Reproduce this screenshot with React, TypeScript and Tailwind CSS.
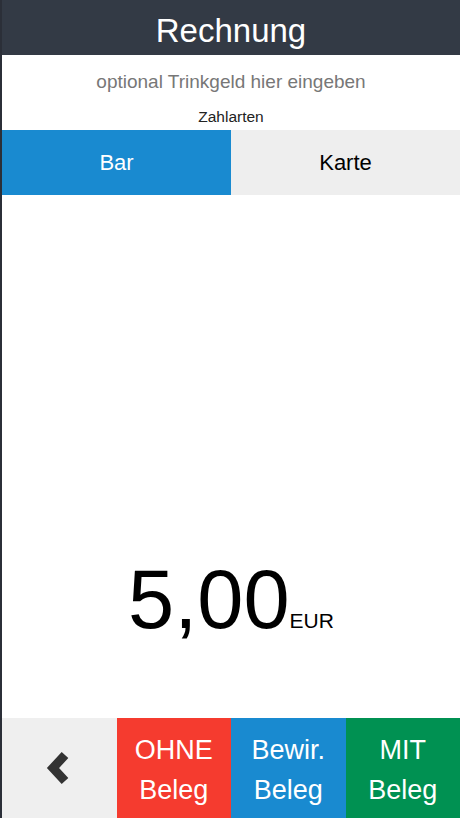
import React from 'react';

function ChevronLeft() {
  return (
    <svg width="26" height="34" viewBox="0 0 26 34" className="text-[#333333]">
      <path d="M20 4 L8 17 L20 30" fill="none" stroke="currentColor" strokeWidth="9" strokeLinejoin="miter" strokeLinecap="butt" />
    </svg>
  );
}

export default function App() {
  const font = { fontFamily: 'Helvetica, "Liberation Sans", Arial, sans-serif' };
  return (
    <div className="h-[818px] w-[460px] flex flex-col bg-white border-l-2 border-[#2b2f38] overflow-hidden" style={font}>
      {/* Header */}
      <header className="h-[55px] shrink-0 bg-[#333a45] flex items-center justify-center">
        <h1 className="text-[33px] leading-none text-white pt-[5px]">Rechnung</h1>
      </header>

      <div className="h-[52px] flex items-center justify-center text-[19px] text-[#777777] pt-[2px]">
        optional Trinkgeld hier eingeben
      </div>
      <div className="h-[23px] flex items-start justify-center text-[15.5px] text-[#222222] leading-[20px]">
        Zahlarten
      </div>

      {/* Payment type tabs */}
      <div className="h-[65px] grid grid-cols-2 shrink-0">
        <button className="bg-[#198ad0] text-white text-[22px]">Bar</button>
        <button className="bg-[#eeeeee] text-black text-[22px]">Karte</button>
      </div>

      {/* Amount */}
      <div className="flex-1 flex items-end justify-center pb-[77px]">
        <div className="flex items-baseline text-black">
          <span className="text-[83px] leading-none">5,00</span>
          <span className="text-[21px] leading-none">EUR</span>
        </div>
      </div>

      {/* Bottom actions */}
      <div className="h-[100px] shrink-0 grid grid-cols-4">
        <button className="bg-[#efefef] flex items-center justify-center pr-[2px]">
          <ChevronLeft />
        </button>
        <button className="bg-[#f53b2f] text-white text-[27px] leading-[40px] pt-[3px] flex flex-col items-center justify-center">
          <span>OHNE</span>
          <span>Beleg</span>
        </button>
        <button className="bg-[#198ad0] text-white text-[27px] leading-[40px] pt-[3px] flex flex-col items-center justify-center">
          <span>Bewir.</span>
          <span>Beleg</span>
        </button>
        <button className="bg-[#009152] text-white text-[27px] leading-[40px] pt-[3px] flex flex-col items-center justify-center">
          <span>MIT</span>
          <span>Beleg</span>
        </button>
      </div>
    </div>
  );
}
